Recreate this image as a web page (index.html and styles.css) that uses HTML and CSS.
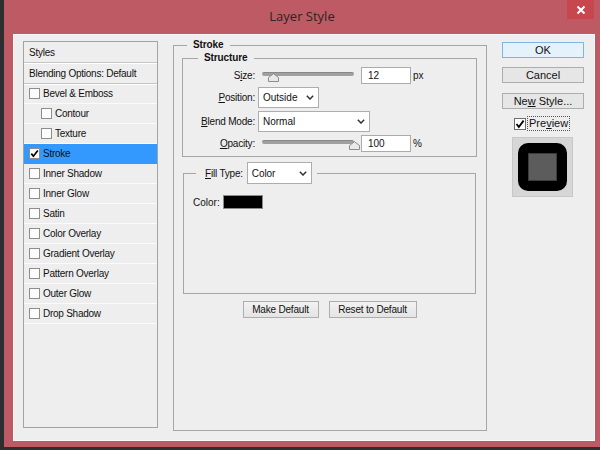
FILE: index.html
```html
<!DOCTYPE html>
<html>
<head>
<meta charset="utf-8">
<link rel="stylesheet" href="styles.css">
</head>
<body>
<div class="window">
  <div class="titlebar">
    <div></div>
    <div class="title">Layer Style</div>
    <div class="close">
      <svg width="10" height="10" viewBox="0 0 10 10"><path d="M1.5 1.5L8.5 8.5M8.5 1.5L1.5 8.5" stroke="#fff" stroke-width="2" fill="none"/></svg>
    </div>
  </div>
  <div class="content">
    <div class="styles">
      <div class="row head">Styles</div>
      <div class="row head">Blending Options: Default</div>
      <div class="row"><span class="cb"></span>Bevel &amp; Emboss</div>
      <div class="row sub"><span class="cb"></span>Contour</div>
      <div class="row sub"><span class="cb"></span>Texture</div>
      <div class="row active"><span class="cb"><svg width="9" height="9" viewBox="0 0 9 9"><path d="M1.3 4.6L3.4 7.2L7.8 1.4" stroke="#000" stroke-width="1.7" fill="none"/></svg></span>Stroke</div>
      <div class="row"><span class="cb"></span>Inner Shadow</div>
      <div class="row"><span class="cb"></span>Inner Glow</div>
      <div class="row"><span class="cb"></span>Satin</div>
      <div class="row"><span class="cb"></span>Color Overlay</div>
      <div class="row"><span class="cb"></span>Gradient Overlay</div>
      <div class="row"><span class="cb"></span>Pattern Overlay</div>
      <div class="row"><span class="cb"></span>Outer Glow</div>
      <div class="row"><span class="cb"></span>Drop Shadow</div>
    </div>

    <fieldset class="group main">
      <legend>Stroke</legend>
      <fieldset class="group structure">
        <legend>Structure</legend>
        <div class="form">
          <div class="lbl">S<u>i</u>ze:</div>
          <div class="ctl">
            <div class="slider"><div class="track"></div><svg class="thumb" style="left:6px" width="11" height="9" viewBox="0 0 11 9"><path d="M0.5 8.5V4.5L5.5 0.7L10.5 4.5V8.5Z" fill="#e9e9e9" stroke="#8c8c8c"/></svg></div>
            <div class="num">12</div><span class="unit">px</span>
          </div>
          <div class="lbl"><u>P</u>osition:</div>
          <div class="ctl">
            <div class="select pos"><span>Outside</span><svg width="8" height="5" viewBox="0 0 8 5"><path d="M0.8 0.8L4 4L7.2 0.8" stroke="#333" stroke-width="1.5" fill="none"/></svg></div>
          </div>
          <div class="lbl"><u>B</u>lend Mode:</div>
          <div class="ctl">
            <div class="select blend"><span>Normal</span><svg width="8" height="5" viewBox="0 0 8 5"><path d="M0.8 0.8L4 4L7.2 0.8" stroke="#333" stroke-width="1.5" fill="none"/></svg></div>
          </div>
          <div class="lbl"><u>O</u>pacity:</div>
          <div class="ctl">
            <div class="slider"><div class="track"></div><svg class="thumb" style="left:87px" width="11" height="9" viewBox="0 0 11 9"><path d="M0.5 8.5V4.5L5.5 0.7L10.5 4.5V8.5Z" fill="#e9e9e9" stroke="#8c8c8c"/></svg></div>
            <div class="num">100</div><span class="unit">%</span>
          </div>
        </div>
      </fieldset>

      <fieldset class="group fill">
        <legend><span class="filllbl"><u>F</u>ill Type:</span><div class="select filltype"><span>Color</span><svg width="8" height="5" viewBox="0 0 8 5"><path d="M0.8 0.8L4 4L7.2 0.8" stroke="#333" stroke-width="1.5" fill="none"/></svg></div></legend>
        <div class="color-row"><span>Color:</span><span class="swatch"></span></div>
      </fieldset>

      <div class="btn-row">
        <div class="btn make">Make Default</div>
        <div class="btn reset">Reset to Default</div>
      </div>
    </fieldset>

    <div class="side">
      <div class="sbtn ok">OK</div>
      <div class="sbtn cancel">Cancel</div>
      <div class="sbtn newstyle"><span>Ne<u>w</u> Style...</span></div>
      <div class="preview-row">
        <span class="pcb"><svg width="10" height="10" viewBox="0 0 10 10"><path d="M1.5 5L3.8 8L8.6 1.6" stroke="#000" stroke-width="1.8" fill="none"/></svg></span>
        <span class="plabel">Pre<u>v</u>iew</span>
      </div>
      <div class="thumbbox">
        <div class="outer-sq"><div class="inner-sq"></div></div>
      </div>
    </div>
  </div>
</div>
</body>
</html>
```

FILE: styles.css
```css
* { box-sizing: border-box; }
body {
  margin: 0;
  background: #2b2f2f;
  font-family: "Liberation Sans", Arial, sans-serif;
}
.window {
  width: 600px;
  height: 450px;
  background: #bd5a63;
  border-left: 4px solid #2b2f2f;
  border-bottom: 3px solid #2b2f2f;
  display: flex;
  flex-direction: column;
}
.titlebar {
  flex: none;
  height: 34px;
  display: grid;
  grid-template-columns: 1fr auto 1fr;
}
.title {
  align-self: center;
  font-family: "Open Sans", sans-serif;
  font-size: 13px;
  color: #2e2326;
  margin-top: -2px;
}
.close {
  justify-self: end;
  width: 27px;
  height: 19px;
  margin-right: 6px;
  background: #c8474f;
  display: flex;
  align-items: center;
  justify-content: center;
}
.content {
  flex: 1;
  margin: 0 5px 6px 9px;
  background: #eeeeee;
  box-shadow: inset 0 0 0 1px #f9f9f9;
  display: grid;
  grid-template-columns: 135px 314px 82px;
  column-gap: 15px;
  padding-left: 10px;
  align-items: start;
  font-size: 10px;
  color: #111;
}

/* styles list */
.styles {
  margin-top: 7px;
  height: 387px;
  border: 1px solid #a3a3a3;
}
.row {
  height: 20px;
  display: flex;
  align-items: center;
  gap: 3px;
  padding-left: 5px;
  border-bottom: 1px solid #fbfbfb;
  letter-spacing: -0.25px;
}
.row.head {
  height: 21px;
  border-bottom: 1px solid #c4c4c4;
  box-shadow: 0 1px 0 #fff;
}
.row.sub { padding-left: 17px; }
.row.active {
  background: #3399ff;
  border-bottom-color: #3399ff;
}
.cb {
  flex: none;
  width: 11px;
  height: 11px;
  border: 1px solid #8e8e8e;
  background: #fcfcfc;
  display: flex;
  align-items: center;
  justify-content: center;
}

/* group boxes */
fieldset {
  margin: 0;
  min-width: 0;
  padding: 0;
  border: 1px solid #a6a6a6;
}
legend {
  font-weight: bold;
  line-height: 12px;
  padding: 0 6px;
  letter-spacing: -0.1px;
}
.main {
  margin-top: 5px;
  height: 392px;
  padding: 0 9px 0 8px;
}
.main > legend { margin-left: 5px; }
.structure {
  margin-top: 1px;
  width: 295px;
  padding: 3px 0 4px;
}
.structure > legend { margin-left: 15px; }

.form {
  display: grid;
  grid-template-columns: 72px auto;
  column-gap: 3px;
  row-gap: 3px;
  align-items: center;
}
.lbl {
  text-align: right;
  letter-spacing: -0.2px;
}
.ctl {
  display: flex;
  align-items: center;
}
.slider {
  position: relative;
  width: 92px;
  height: 17px;
  margin-left: 4px;
}
.track {
  margin-top: 5px;
  height: 4px;
  border-radius: 2px;
  background: #a0a0a0;
  border-top: 1px solid #888;
}
.thumb {
  position: absolute;
  top: 6px;
}
.num {
  width: 50px;
  height: 17px;
  margin-left: 7px;
  border: 1px solid #ababab;
  background: #fff;
  padding-left: 6px;
  line-height: 15px;
}
.unit { margin-left: 2px; }
.select {
  height: 21px;
  border: 1px solid #adadad;
  background: #fff;
  display: flex;
  align-items: center;
  justify-content: space-between;
  padding: 0 4px 0 4px;
  font-weight: normal;
}
.select.pos { width: 61px; }
.select.blend { width: 112px; }

.fill {
  margin-top: 5px;
  margin-left: 1px;
  width: 293px;
  height: 132px;
  padding: 0 0 0 9px;
}
.fill > legend {
  margin-left: 3px;
  padding: 0 5px 0 9px;
  line-height: normal;
  font-weight: normal;
  display: flex;
  align-items: center;
}
.filllbl { margin-right: 4px; letter-spacing: -0.2px; }
.select.filltype { width: 65px; height: 22px; }
.color-row {
  margin-top: 11px;
  display: flex;
  align-items: center;
  gap: 3px;
}
.swatch {
  width: 40px;
  height: 14px;
  background: #000;
  border: 1px solid #8a8a8a;
}

.btn-row {
  margin-top: 7px;
  display: flex;
  justify-content: center;
  gap: 10px;
}
.btn {
  height: 17px;
  border: 1px solid #adadad;
  background: linear-gradient(#f2f2f2, #e4e4e4);
  display: flex;
  align-items: center;
  justify-content: center;
  letter-spacing: -0.2px;
}
.btn.make { width: 76px; }
.btn.reset { width: 88px; }

/* right column */
.side {
  margin-top: 8px;
  display: flex;
  flex-direction: column;
}
.sbtn {
  height: 16px;
  border: 1px solid #adadad;
  background: #e6e6e6;
  font-size: 11px;
  color: #111;
  display: flex;
  align-items: center;
  justify-content: center;
}
.sbtn.ok {
  background: #e5f1fb;
  border-color: #7fb4e6;
}
.sbtn.cancel { margin-top: 9px; }
.sbtn.newstyle { margin-top: 10px; }
.preview-row {
  margin-top: 8px;
  margin-left: 12px;
  display: flex;
  align-items: center;
  gap: 2px;
  font-size: 11px;
}
.pcb {
  width: 12px;
  height: 12px;
  border: 1px solid #6e6e6e;
  background: #fff;
  display: flex;
  align-items: center;
  justify-content: center;
}
.plabel {
  outline: 1px dotted #555;
  padding: 0 1px;
  line-height: 13px;
}
.thumbbox {
  margin-top: 7px;
  margin-left: 10px;
  width: 61px;
  height: 60px;
  background: #d6d6d6;
  border: 1px solid #c8c8c8;
  display: flex;
  align-items: center;
  justify-content: center;
}
.outer-sq {
  width: 49px;
  height: 48px;
  background: #000;
  border-radius: 10px;
  display: flex;
  align-items: center;
  justify-content: center;
}
.inner-sq {
  width: 29px;
  height: 28px;
  background: #5c5c5c;
  border: 1px solid #3c3c3c;
}
```
